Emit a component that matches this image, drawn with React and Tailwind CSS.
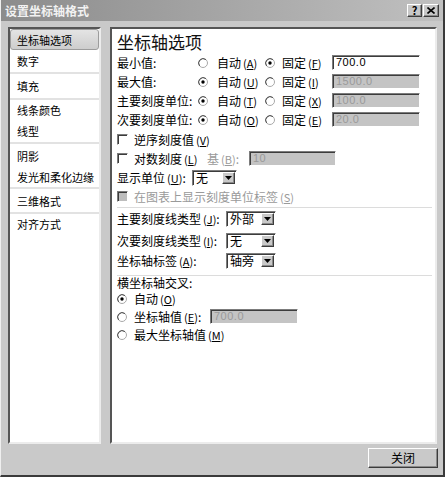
import React from 'react';

// Classic sunken 3D edge used by inputs, panels and combo boxes
const sunken =
  'border border-t-[#7c7c7c] border-l-[#7c7c7c] border-b-white border-r-white shadow-[inset_1px_1px_0_#3c3c3c]';
const raised =
  'border border-t-white border-l-white border-b-[#3c3c3c] border-r-[#3c3c3c] shadow-[inset_-1px_-1px_0_#8a8a8a]';

function Mn({ k, dim }) {
  return (
    <span className={`ml-[2px] text-[11px] ${dim ? 'text-[#9a9a9a]' : ''}`}>
      (<span className="underline">{k}</span>)
    </span>
  );
}

function Radio({ on }) {
  return (
    <svg width="10" height="10" viewBox="0 0 10 10" className="shrink-0">
      <circle cx="5" cy="5" r="4.5" fill="#fff" stroke="#a8a8a8" />
      <path d="M1.6 7.9 A4.5 4.5 0 0 1 7.9 1.6" fill="none" stroke="#4a4a4a" />
      {on && <circle cx="5" cy="5" r="1.7" fill="#000" />}
    </svg>
  );
}

function Check({ disabled }) {
  return (
    <span
      className={`block shrink-0 w-[11px] h-[11px] ${sunken} ${disabled ? 'bg-[#bdbdbd]' : 'bg-white'}`}
    />
  );
}

function Field({ value, disabled, className }) {
  return (
    <div
      className={`${className} h-[15px] flex items-center pl-[3px] ${sunken} ${
        disabled ? 'bg-[#c4c4c4] text-[#9a9a9a]' : 'bg-white text-black'
      } text-[11px] tracking-[0.5px] font-['Liberation_Sans',sans-serif] leading-none`}
    >
      {value}
    </div>
  );
}

function Combo({ value, className }) {
  return (
    <div className={`${className} h-[16px] flex items-center bg-white ${sunken}`}>
      <span className="flex-1 pl-[3px] text-[12px] leading-none">{value}</span>
      <span className={`w-[13px] h-[12px] mr-[1px] bg-[#c8c8c8] flex items-center justify-center ${raised}`}>
        <svg width="7" height="4" viewBox="0 0 7 4">
          <path d="M0 0h7L3.5 4z" fill="#000" />
        </svg>
      </span>
    </div>
  );
}

function AutoFixRow({ label, a, f, autoOn, value }) {
  return (
    <div className="h-[19px] flex items-center">
      <span className="w-[81px]">{label}</span>
      <span className="w-[67px] flex items-center">
        <Radio on={autoOn} />
        <span className="ml-[9px]">
          自动<Mn k={a} />
        </span>
      </span>
      <span className="w-[67px] flex items-center">
        <Radio on={!autoOn} />
        <span className="ml-[7px]">
          固定<Mn k={f} />
        </span>
      </span>
      <Field value={value} disabled={autoOn} className="w-[88px]" />
    </div>
  );
}

function Sep() {
  return <div className="h-[2px] bg-[#e2e2e2]" />;
}

function Item({ h, children }) {
  return <div className={`${h} flex items-center pl-[7px] whitespace-nowrap`}>{children}</div>;
}

export default function App() {
  return (
    <div className="w-[445px] h-[477px] flex flex-col bg-[#c9c9c9] border-l border-l-[#efefef] border-r-2 border-b-2 border-[#3a3a3a] text-[12px] leading-[14px] text-black font-['Noto_Sans_CJK_SC','Noto_Sans',sans-serif] overflow-hidden select-none">
      {/* title bar */}
      <div className="h-[21px] shrink-0 flex items-center justify-between pl-[4px] pr-[4px] bg-gradient-to-r from-[#8c8c8c] to-[#c0c0c0]">
        <span className="text-[12px] font-bold text-[#f2f2f2] leading-none">设置坐标轴格式</span>
        <div className="flex">
          <span className={`w-[15px] h-[13px] bg-[#c8c8c8] flex items-center justify-center text-[11px] font-bold leading-none ${raised}`}>
            ?
          </span>
          <span className={`w-[16px] h-[13px] ml-[1px] bg-[#c8c8c8] flex items-center justify-center ${raised}`}>
            <svg width="8" height="7" viewBox="0 0 8 7">
              <path d="M0.5 0.5L7.5 6.5M7.5 0.5L0.5 6.5" stroke="#000" strokeWidth="1.6" />
            </svg>
          </span>
        </div>
      </div>

      {/* body */}
      <div className="flex-1 flex gap-[9px] pt-[6px] pl-[7px] pr-[6px]">
        {/* category list */}
        <div className="w-[93px] bg-white border-2 border-t-[#555] border-l-[#555] border-b-[#ececec] border-r-[#ececec] flex flex-col text-[11px]">
          <div className="h-[21px] flex items-center pl-[6px] rounded-[3px] border border-[#9c9c9c] bg-gradient-to-b from-[#e4e4e4] to-[#cdcdcd] whitespace-nowrap">
            坐标轴选项
          </div>
          <Item h="h-[22px]">数字</Item>
          <Sep />
          <Item h="h-[24px]">填充</Item>
          <Sep />
          <Item h="h-[20px]">线条颜色</Item>
          <Item h="h-[22px]">线型</Item>
          <Sep />
          <Item h="h-[23px]">阴影</Item>
          <Item h="h-[20px]">发光和柔化边缘</Item>
          <Sep />
          <Item h="h-[23px]">三维格式</Item>
          <Sep />
          <Item h="h-[20px]">对齐方式</Item>
        </div>

        {/* options panel */}
        <div className="flex-1 bg-white border-2 border-t-[#555] border-l-[#555] border-b-[#ececec] border-r-[#ececec] pl-[5px] pr-[2px] flex flex-col">
          <div className="h-[24px] pt-[3px] text-[17px] leading-[20px] text-[#111]">坐标轴选项</div>
          <AutoFixRow label="最小值:" a="A" f="F" autoOn={false} value="700.0" />
          <AutoFixRow label="最大值:" a="U" f="I" autoOn value="1500.0" />
          <AutoFixRow label="主要刻度单位:" a="T" f="X" autoOn value="100.0" />
          <AutoFixRow label="次要刻度单位:" a="O" f="E" autoOn value="20.0" />

          <div className="h-[21px] flex items-center">
            <Check />
            <span className="ml-[6px]">
              逆序刻度值<Mn k="V" />
            </span>
          </div>
          <div className="h-[17px] flex items-center">
            <Check />
            <span className="ml-[6px] w-[73px]">
              对数刻度<Mn k="L" />
            </span>
            <span className="w-[42px] text-[#9a9a9a]">
              基<Mn k="B" dim />:
            </span>
            <Field value="10" disabled className="w-[87px]" />
          </div>
          <div className="h-[21px] flex items-center">
            <span className="w-[75px]">
              显示单位<Mn k="U" />:
            </span>
            <Combo value="无" className="w-[45px]" />
          </div>
          <div className="h-[17px] flex items-center">
            <Check disabled />
            <span className="ml-[6px] text-[#9a9a9a]">
              在图表上显示刻度单位标签<Mn k="S" dim />
            </span>
          </div>
          <div className="h-px bg-[#dcdcdc] mt-[2px] mr-[1px]" />

          <div className="h-[22px] flex items-center">
            <span className="w-[109px]">
              主要刻度线类型<Mn k="J" />:
            </span>
            <Combo value="外部" className="w-[50px]" />
          </div>
          <div className="h-[21px] flex items-center">
            <span className="w-[109px]">
              次要刻度线类型<Mn k="I" />:
            </span>
            <Combo value="无" className="w-[50px]" />
          </div>
          <div className="h-[20px] flex items-center">
            <span className="w-[109px]">
              坐标轴标签<Mn k="A" />:
            </span>
            <Combo value="轴旁" className="w-[50px]" />
          </div>
          <div className="h-px bg-[#dcdcdc] mt-[4px] mr-[1px]" />

          <div className="h-[14px] flex items-center">横坐标轴交叉:</div>
          <div className="h-[17px] flex items-center">
            <Radio on />
            <span className="ml-[7px]">
              自动<Mn k="O" />
            </span>
          </div>
          <div className="h-[19px] flex items-center">
            <Radio />
            <span className="ml-[7px] w-[76px]">
              坐标轴值<Mn k="E" />:
            </span>
            <Field value="700.0" disabled className="w-[88px]" />
          </div>
          <div className="h-[18px] flex items-center">
            <Radio />
            <span className="ml-[7px]">
              最大坐标轴值<Mn k="M" />
            </span>
          </div>
        </div>
      </div>

      {/* footer */}
      <div className="h-[31px] shrink-0 flex justify-end items-start pt-[4px] pr-[5px]">
        <button className={`w-[70px] h-[20px] bg-[#c9c9c9] flex items-center justify-center text-[12px] leading-none ${raised}`}>
          关闭
        </button>
      </div>
    </div>
  );
}
